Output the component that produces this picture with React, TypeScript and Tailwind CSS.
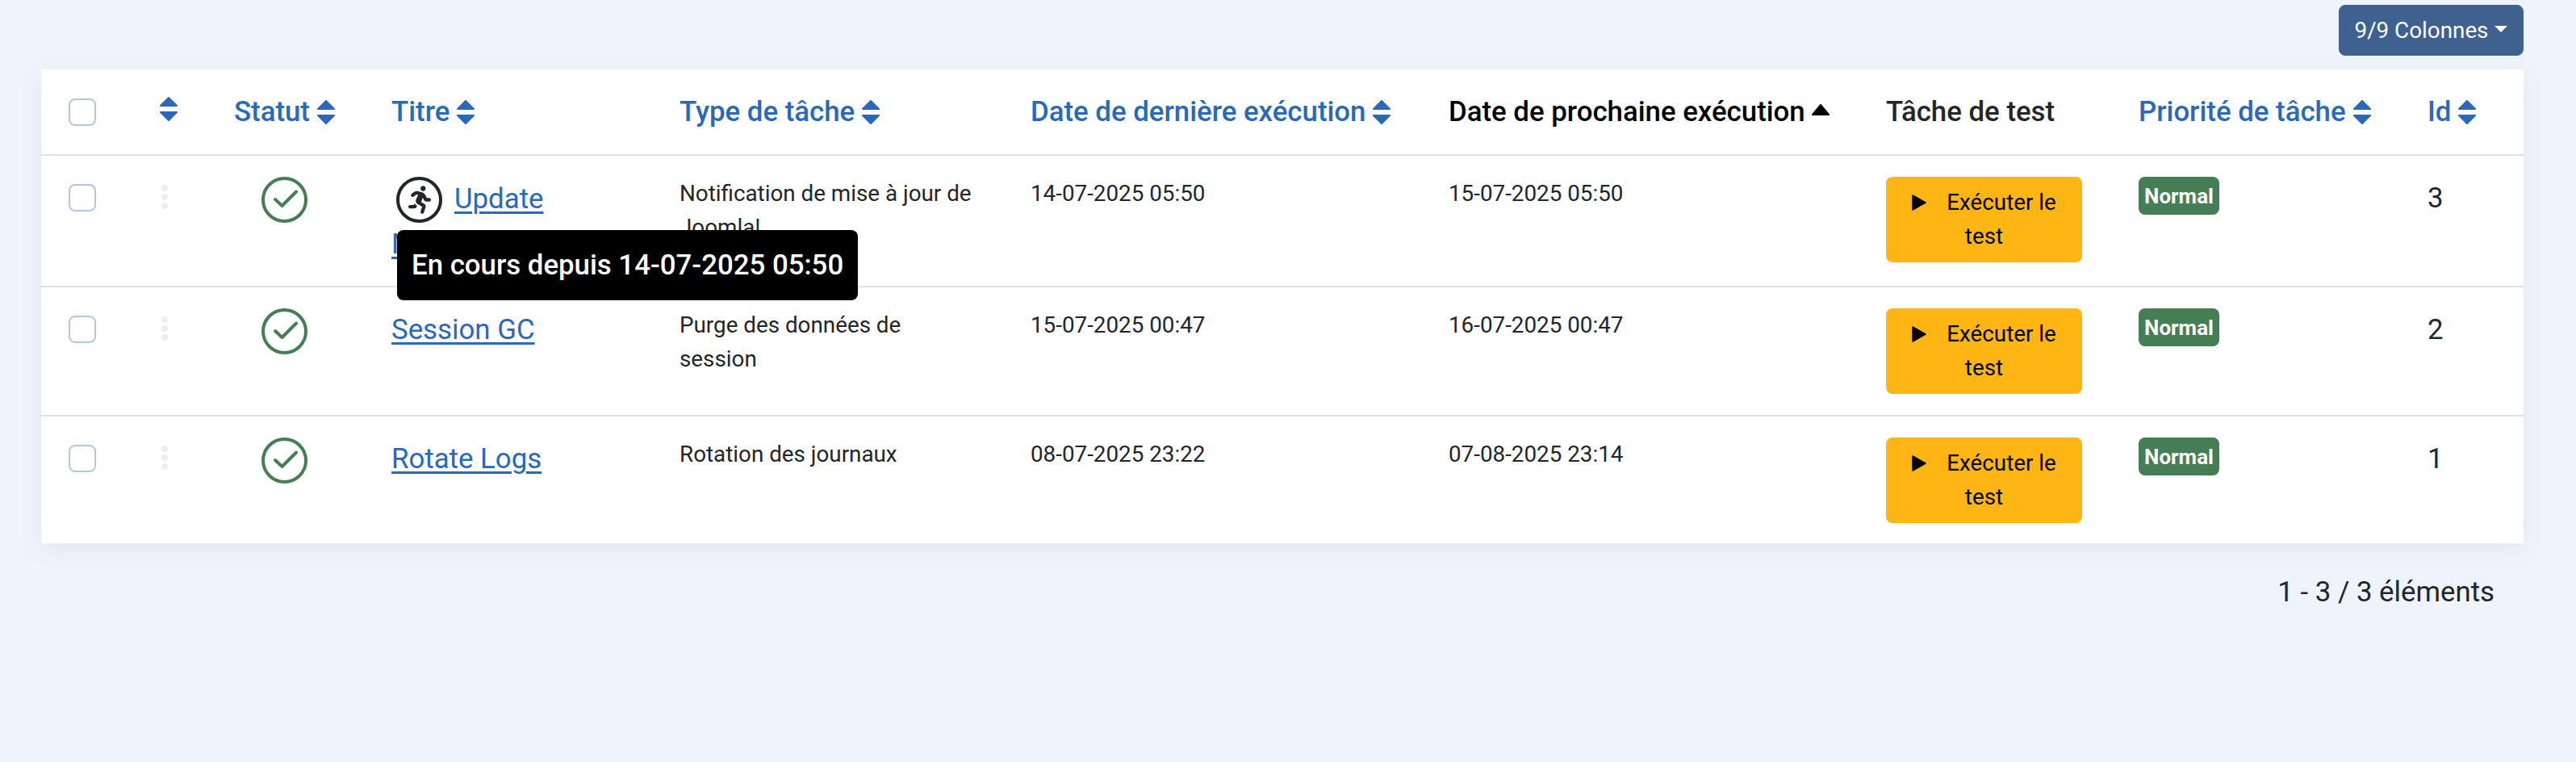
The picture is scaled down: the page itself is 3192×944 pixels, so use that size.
import React from "react";
import { FaRunning } from "react-icons/fa";

interface TaskRow {
    id: number;
    title: string;
    running: boolean;
    type: string;
    lastRun: string;
    nextRun: string;
    rowClass: string;
}

const rows: TaskRow[] = [
    { id: 3, title: "Update Notification", running: true, type: "Notification de mise à jour de Joomla!", lastRun: "14-07-2025 05:50", nextRun: "15-07-2025 05:50", rowClass: "h-[163px] border-b-2 border-[#dfe3e7]" },
    { id: 2, title: "Session GC", running: false, type: "Purge des données de session", lastRun: "15-07-2025 00:47", nextRun: "16-07-2025 00:47", rowClass: "h-[160px] border-b-2 border-[#dfe3e7]" },
    { id: 1, title: "Rotate Logs", running: false, type: "Rotation des journaux", lastRun: "08-07-2025 23:22", nextRun: "07-08-2025 23:14", rowClass: "h-[158px]" },
];

const SortIcon = () => (
    <svg viewBox="0 0 22 30" className="w-[22px] h-[30px] shrink-0" fill="#2a69b8" stroke="#2a69b8" strokeWidth="2" strokeLinejoin="round">
        <path d="M11 1 L21 11 L1 11 Z" />
        <path d="M1 19 L21 19 L11 29 Z" />
    </svg>
);

const Checkbox = () => <div className="w-[34px] h-[34px] rounded-lg border-2 border-[#b4c7e2] bg-white" />;

const StatusIcon = () => (
    <svg viewBox="0 0 57 57" className="w-[57px] h-[57px] inline-block" fill="none" stroke="#457d54">
        <circle cx="28.5" cy="28.5" r="26.5" strokeWidth="4" />
        <path d="M17 28 L25.5 36 L43 18.5" strokeWidth="4" strokeLinecap="round" strokeLinejoin="round" />
    </svg>
);

const SortHeader = ({ label }: { label: string }) => (
    <span className="inline-flex items-center gap-[9px] whitespace-nowrap text-[#2a69b8]">
        {label}
        <SortIcon />
    </span>
);

export default function App() {
    return (
        <div className="min-h-[944px] bg-[#eff4fc] font-['Roboto',sans-serif] text-[#22262a] pl-[51px] pr-[65px] pt-[6px]">
            <div className="flex justify-end">
                <button className="h-[63px] w-[229px] rounded-lg bg-[#3f618f] text-white text-[27.8px] flex items-center justify-center gap-[8px] border border-[#3f618f]">
                    9/9 Colonnes
                    <span className="w-0 h-0 border-x-[8px] border-x-transparent border-t-[8px] border-t-white -translate-y-[2px]" />
                </button>
            </div>

            <div className="mt-[17px] bg-white shadow-[0_8px_28px_rgba(40,60,100,0.07)]">
                <table className="w-full table-fixed border-collapse text-left">
                    <colgroup>
                        <col className="w-[131px]" />
                        <col className="w-[92px]" />
                        <col className="w-[195px]" />
                        <col className="w-[357px]" />
                        <col className="w-[435px]" />
                        <col className="w-[518px]" />
                        <col className="w-[542px]" />
                        <col className="w-[313px]" />
                        <col className="w-[358px]" />
                        <col className="w-[135px]" />
                    </colgroup>
                    <thead>
                        <tr className="h-[106px] border-b-2 border-[#dfe3e7] text-[34.8px] font-medium">
                            <th className="pl-[34px] font-medium"><Checkbox /></th>
                            <th className="pl-4 font-medium"><SortHeader label="" /></th>
                            <th className="pl-4 font-medium"><SortHeader label="Statut" /></th>
                            <th className="pl-4 font-medium"><SortHeader label="Titre" /></th>
                            <th className="pl-4 font-medium"><SortHeader label="Type de tâche" /></th>
                            <th className="pl-4 font-medium"><SortHeader label="Date de dernière exécution" /></th>
                            <th className="pl-4 font-medium text-black">
                                <span className="inline-flex items-center gap-[8px] whitespace-nowrap">
                                    Date de prochaine exécution
                                    <svg viewBox="0 0 22 14" className="w-[22px] h-[14px] -translate-y-[3px]" fill="#000" stroke="#000" strokeWidth="2" strokeLinejoin="round">
                                        <path d="M11 1 L21 13 L1 13 Z" />
                                    </svg>
                                </span>
                            </th>
                            <th className="pl-4 font-medium">Tâche de test</th>
                            <th className="pl-4 font-medium"><SortHeader label="Priorité de tâche" /></th>
                            <th className="pl-4 font-medium"><SortHeader label="Id" /></th>
                        </tr>
                    </thead>
                    <tbody>
                        {rows.map((row) => (
                            <tr key={row.id} className={row.rowClass}>
                                <td className="pl-[34px] pt-[35px] align-top"><Checkbox /></td>
                                <td className="pl-4 pt-[36px] align-top">
                                    <div className="flex flex-col gap-[3px] pl-[2px]">
                                        <span className="w-2 h-2 rounded-full bg-[#eeeeee]" />
                                        <span className="w-2 h-2 rounded-full bg-[#eeeeee]" />
                                        <span className="w-2 h-2 rounded-full bg-[#eeeeee]" />
                                    </div>
                                </td>
                                <td className="pl-4 pr-[55px] pt-[26px] align-top text-center"><StatusIcon /></td>
                                <td className="pl-4 pr-4 pt-[26px] align-top text-[34.8px] leading-[53px]">
                                    <div className="relative">
                                        {row.running && (
                                            <span className="inline-flex items-center justify-center align-[-7px] w-[57px] h-[57px] mr-[15px] ml-[6px] rounded-full border-[4px] border-[#22262a]">
                                                <FaRunning className="w-[28px] h-[35px] text-[#22262a]" />
                                            </span>
                                        )}
                                        <a href="#" className="text-[#2a69b8] underline decoration-[3px] underline-offset-[4px]">{row.title}</a>
                                        {row.running && (
                                            <div className="absolute left-[7px] top-[66px] rounded-lg bg-black px-[18px] py-[17px] text-white font-medium whitespace-nowrap leading-[53px]">
                                                En cours depuis 14-07-2025 05:50
                                            </div>
                                        )}
                                    </div>
                                </td>
                                <td className="pl-4 pr-[48px] pt-[26px] align-top text-[27.8px] leading-[42px]">{row.type}</td>
                                <td className="pl-4 pt-[26px] align-top text-[27.8px] leading-[42px]">{row.lastRun}</td>
                                <td className="pl-4 pt-[26px] align-top text-[27.8px] leading-[42px]">{row.nextRun}</td>
                                <td className="pl-4 pt-[26px] align-top">
                                    <button className="w-[243px] h-[106px] rounded-lg bg-[#ffb514] text-black text-[27.8px] leading-[42px] px-[24px] text-center">
                                        <svg viewBox="0 0 18 20" className="inline-block w-[18px] h-[20px] mr-[25px] align-[-1px]" fill="#000">
                                            <path d="M1 1 L17 10 L1 19 Z" stroke="#000" strokeWidth="1.5" strokeLinejoin="round" />
                                        </svg>
                                        Exécuter le test
                                    </button>
                                </td>
                                <td className="pl-4 pt-[26px] align-top">
                                    <span className="inline-flex items-center justify-center w-[100px] h-[47px] pt-[2px] rounded-lg bg-[#457d54] text-white font-bold text-[26px]">Normal</span>
                                </td>
                                <td className="pl-4 pt-[26px] align-top text-[34.8px] leading-[53px]">{row.id}</td>
                            </tr>
                        ))}
                    </tbody>
                </table>
            </div>

            <div className="flex justify-end pr-[36px] pt-[34px] text-[34.8px] leading-[53px]">1 - 3 / 3 éléments</div>
        </div>
    );
}
